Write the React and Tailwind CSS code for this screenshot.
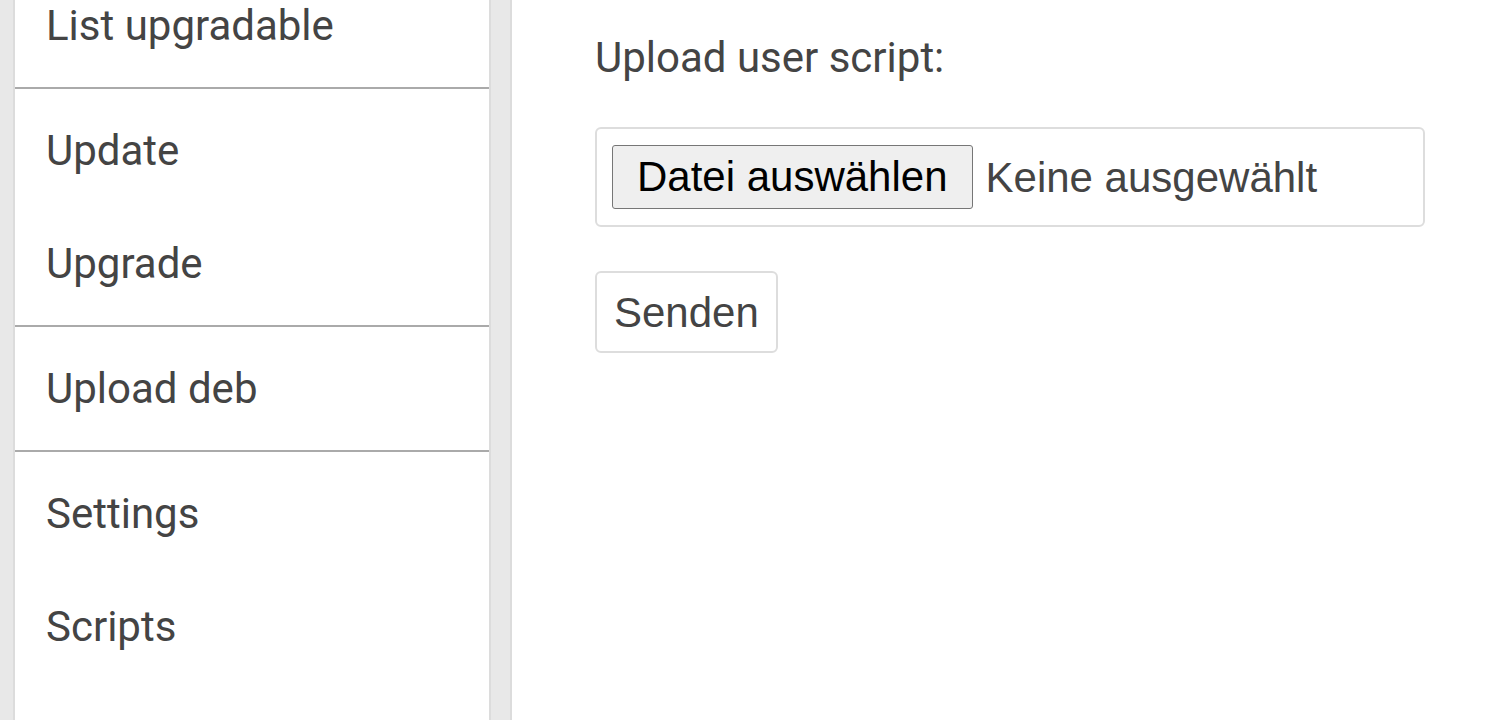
const groups = [
    ['List upgradable'],
    ['Update', 'Upgrade'],
    ['Upload deb'],
    ['Settings', 'Scripts'],
];

const App = () => {
    return (
        <div className="h-[720px] overflow-hidden flex bg-[#e8e8e8] text-[#444]" style={{ fontFamily: 'Roboto, sans-serif' }}>
            {/* Sidebar */}
            <div className="pl-[13px] h-full">
                <aside className="w-[478px] h-full bg-white border-x-2 border-[#dcdcdc] overflow-hidden">
                    <div className="-mt-[36px]">
                        {groups.map((items, gi) => (
                            <div key={gi} className={`py-[5px] ${gi < groups.length - 1 ? 'border-b-2 border-[#aaaaaa]' : ''}`}>
                                {items.map((label) => (
                                    <div key={label} className="h-[113px] flex items-center pl-[31px] text-[42px] leading-[50px]">
                                        {label}
                                    </div>
                                ))}
                            </div>
                        ))}
                    </div>
                </aside>
            </div>

            {/* Main */}
            <main className="ml-[19px] flex-1 h-full bg-white border-l-2 border-[#dcdcdc] pl-[83px] pt-[33px]">
                <div className="text-[42px] leading-[50px]">Upload user script:</div>
                <div className="mt-[44px] w-[830px] h-[100px] border-2 border-[#dddddd] rounded-[6px] flex items-center px-[15px]" style={{ fontFamily: '"Liberation Sans", Arial, sans-serif' }}>
                    <button className="h-[64px] px-[24px] bg-[#efefef] border border-[#767676] rounded-[3px] text-black text-[42px] leading-none">
                        Datei auswählen
                    </button>
                    <span className="ml-[13px] text-[42px] text-[#444]">Keine ausgewählt</span>
                </div>
                <button className="mt-[44px] h-[82px] px-[17px] bg-white border-2 border-[#dddddd] rounded-[6px] text-[42px] text-[#444]" style={{ fontFamily: '"Liberation Sans", Arial, sans-serif' }}>
                    Senden
                </button>
            </main>
        </div>
    );
};

export default App;
